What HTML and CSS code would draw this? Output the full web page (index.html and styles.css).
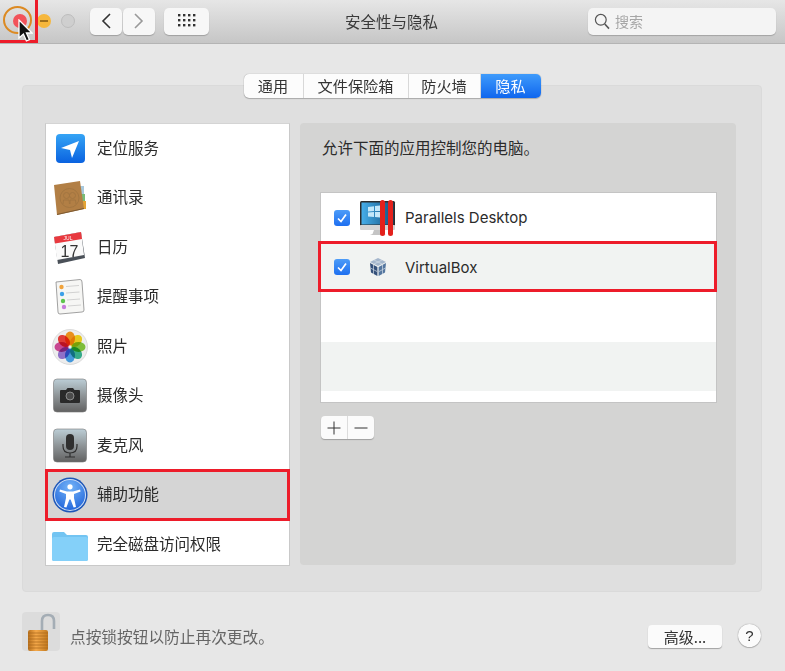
FILE: index.html
```html
<!DOCTYPE html>
<html lang="zh-CN">

<head>
    <meta charset="UTF-8">
    <title>安全性与隐私</title>
    <link rel="stylesheet" href="styles.css">
</head>

<body>
    <header class="titlebar">
        <div class="lights">
            <span class="light light-red"></span>
            <span class="light light-yellow"><i></i></span>
            <span class="light light-grey"></span>
        </div>
        <div class="nav">
            <button class="tool-btn nav-btn">
                <svg width="12" height="18" viewBox="0 0 12 18"><path d="M10 2 L3 9 L10 16" fill="none" stroke="#333" stroke-width="1.6"/></svg>
            </button>
            <button class="tool-btn nav-btn">
                <svg width="12" height="18" viewBox="0 0 12 18"><path d="M2 2 L9 9 L2 16" fill="none" stroke="#999" stroke-width="1.6"/></svg>
            </button>
        </div>
        <button class="tool-btn grid-btn">
            <svg width="18" height="14" viewBox="0 0 18 14" fill="#333">
                <rect x="0" y="0" width="2.4" height="2.4"/><rect x="5" y="0" width="2.4" height="2.4"/><rect x="10" y="0" width="2.4" height="2.4"/><rect x="15" y="0" width="2.4" height="2.4"/>
                <rect x="0" y="5" width="2.4" height="2.4"/><rect x="5" y="5" width="2.4" height="2.4"/><rect x="10" y="5" width="2.4" height="2.4"/><rect x="15" y="5" width="2.4" height="2.4"/>
                <rect x="0" y="10" width="2.4" height="2.4"/><rect x="5" y="10" width="2.4" height="2.4"/><rect x="10" y="10" width="2.4" height="2.4"/><rect x="15" y="10" width="2.4" height="2.4"/>
            </svg>
        </button>
        <h1 class="title">安全性与隐私</h1>
        <div class="search">
            <svg width="16" height="17" viewBox="0 0 16 17"><circle cx="6.8" cy="6.8" r="5.4" fill="none" stroke="#555" stroke-width="1.2"/><path d="M10.8 11 L15 15.6" stroke="#555" stroke-width="1.6"/></svg>
            <span>搜索</span>
        </div>
    </header>

    <main class="content">
        <nav class="tabs">
            <a class="tab">通用</a>
            <a class="tab">文件保险箱</a>
            <a class="tab">防火墙</a>
            <a class="tab tab-active">隐私</a>
        </nav>

        <section class="panel">
            <ul class="services">
                <li class="service">
                    <svg class="service-icon" viewBox="0 0 36 36">
                        <defs><linearGradient id="blue" x1="0" y1="0" x2="0" y2="1"><stop offset="0" stop-color="#35a4f5"/><stop offset="1" stop-color="#0a62e0"/></linearGradient></defs>
                        <rect x="4" y="3" width="29" height="29" rx="4" fill="url(#blue)"/>
                        <path d="M9 17 L27 10 L20 27 L18 19 Z" fill="#fff"/>
                    </svg>
                    <span>定位服务</span>
                </li>
                <li class="service">
                    <svg class="service-icon" viewBox="0 0 36 36">
                        <rect x="28" y="6" width="4" height="8" fill="#a8c8dc"/><rect x="29" y="14" width="4" height="7" fill="#78bb78"/><rect x="30" y="21" width="4" height="8" fill="#e4a435"/>
                        <path d="M2 5 L28 1 L32 29 L5 35 Z" fill="#b27f45"/>
                        <path d="M5 35 L32 29 L31.8 28 L5 34 Z" fill="#7d5a32"/>
                        <circle cx="17.5" cy="18" r="9.5" fill="none" stroke="#a0743f" stroke-width="0.9"/>
                        <circle cx="14.5" cy="15.5" r="3" fill="none" stroke="#a0743f" stroke-width="0.9"/>
                        <circle cx="20.5" cy="15.5" r="3" fill="none" stroke="#a0743f" stroke-width="0.9"/>
                        <path d="M11 24 L11.5 20 L17 20 L17.5 24 M18 24 L18 20 L23.5 20 L24 24" fill="none" stroke="#a0743f" stroke-width="0.9"/>
                    </svg>
                    <span>通讯录</span>
                </li>
                <li class="service">
                    <svg class="service-icon" viewBox="0 0 36 36">
                        <path d="M2 7 L29 2 L33 28 L6 34 Z" fill="#4a5058"/>
                        <path d="M2 7 L29 2 L32 25 L5 30 Z" fill="#fafafa"/>
                        <path d="M2 7 L29 2 L30 9 L3 13.5 Z" fill="#e8393f"/>
                        <text class="cal-month" x="16" y="10" text-anchor="middle">JUL</text>
                        <text class="cal-day" x="17.5" y="27" text-anchor="middle">17</text>
                    </svg>
                    <span>日历</span>
                </li>
                <li class="service">
                    <svg class="service-icon" viewBox="0 0 36 36">
                        <path d="M4 3 L28 0.5 Q30 0.5 30 3 L32 31 Q32 33 30 33 L8 35 Q6 35 6 33 Z" fill="#f6f6f4" stroke="#8a8a8a" stroke-width="0.8"/>
                        <circle cx="9.5" cy="8" r="2.2" fill="#f0a23a"/><circle cx="10" cy="15" r="2.2" fill="#3da0e8"/><circle cx="11" cy="22" r="2.2" fill="#5ec44e"/><circle cx="12" cy="28" r="2.2" fill="#c77bdc"/>
                        <path d="M14 7.5 L27 6.5 M14 14 L27.5 13 M15 21 L28 20 M16 27 L29 26" stroke="#c8c8c8" stroke-width="0.8"/>
                    </svg>
                    <span>提醒事项</span>
                </li>
                <li class="service">
                    <svg class="service-icon" viewBox="0 0 36 36">
                        <circle cx="18" cy="18" r="17.5" fill="#ededed" stroke="#c8c8c8" stroke-width="0.6"/>
                        <g class="petals">
                            <ellipse cx="18" cy="9.5" rx="5" ry="7" fill="#fb9a1e"/>
                            <ellipse cx="18" cy="9.5" rx="5" ry="7" fill="#f8d820" transform="rotate(45 18 18)"/>
                            <ellipse cx="18" cy="9.5" rx="5" ry="7" fill="#86cc3e" transform="rotate(90 18 18)"/>
                            <ellipse cx="18" cy="9.5" rx="5" ry="7" fill="#3ab894" transform="rotate(135 18 18)"/>
                            <ellipse cx="18" cy="9.5" rx="5" ry="7" fill="#4aa4ec" transform="rotate(180 18 18)"/>
                            <ellipse cx="18" cy="9.5" rx="5" ry="7" fill="#9a78d8" transform="rotate(225 18 18)"/>
                            <ellipse cx="18" cy="9.5" rx="5" ry="7" fill="#d64c9c" transform="rotate(270 18 18)"/>
                            <ellipse cx="18" cy="9.5" rx="5" ry="7" fill="#f0403c" transform="rotate(315 18 18)"/>
                        </g>
                    </svg>
                    <span>照片</span>
                </li>
                <li class="service">
                    <svg class="service-icon" viewBox="0 0 36 36">
                        <defs><linearGradient id="slate" x1="0" y1="0" x2="0" y2="1"><stop offset="0" stop-color="#bcced6"/><stop offset="0.5" stop-color="#8f9598"/><stop offset="1" stop-color="#626262"/></linearGradient></defs>
                        <rect x="1.5" y="1" width="33" height="33" rx="3.5" fill="url(#slate)" stroke="#777" stroke-width="0.6"/>
                        <path d="M9 12 L14 12 L15.5 10 L21 10 L22.5 12 L27 12 Q28 12 28 13 L28 24 Q28 25 27 25 L9 25 Q8 25 8 24 L8 13 Q8 12 9 12 Z" fill="#2a2a2a"/>
                        <circle cx="18" cy="18" r="4" fill="#4c4c4c" stroke="#a0a0a0" stroke-width="0.8"/>
                    </svg>
                    <span>摄像头</span>
                </li>
                <li class="service">
                    <svg class="service-icon" viewBox="0 0 36 36">
                        <rect x="1.5" y="1" width="33" height="33" rx="3.5" fill="url(#slate)" stroke="#777" stroke-width="0.6"/>
                        <rect x="14" y="6" width="8" height="16" rx="4" fill="#2f2f2f"/>
                        <path d="M11 16 L11 18 Q11 25 18 25 Q25 25 25 18 L25 16 M18 25 L18 29 M13 29 L23 29" fill="none" stroke="#2f2f2f" stroke-width="1.2"/>
                    </svg>
                    <span>麦克风</span>
                </li>
                <li class="service service-selected">
                    <svg class="service-icon" viewBox="0 0 36 36">
                        <defs><radialGradient id="acc" cx="0.5" cy="0.25" r="0.85"><stop offset="0" stop-color="#74b4f8"/><stop offset="1" stop-color="#1a5fd8"/></radialGradient></defs>
                        <circle cx="18" cy="18" r="17.5" fill="#1d56b8"/>
                        <circle cx="18" cy="18" r="16" fill="#cfe0f6"/>
                        <circle cx="18" cy="18" r="15" fill="url(#acc)"/>
                        <circle cx="18" cy="9.8" r="2.6" fill="#fff"/>
                        <path d="M8 12.6 L15 14.6 L21 14.6 L28 12.6 L28.6 14.6 L22 17 L22 21 L24 30 L21.6 30.6 L18.6 22.6 L17.4 22.6 L14.4 30.6 L12 30 L14 21 L14 17 L7.4 14.6 Z" fill="#fff"/>
                    </svg>
                    <span>辅助功能</span>
                </li>
                <li class="service">
                    <svg class="service-icon" viewBox="0 0 36 36">
                        <path d="M0 7 Q0 5 2 5 L12 5 L15 8 L34 8 Q36 8 36 10 L36 32 Q36 34 34 34 L2 34 Q0 34 0 32 Z" fill="#72c4f2"/>
                        <rect x="0" y="10" width="36" height="24" rx="2" fill="#84d0f9"/>
                    </svg>
                    <span>完全磁盘访问权限</span>
                </li>
            </ul>

            <div class="detail">
                <p class="detail-label">允许下面的应用控制您的电脑。</p>
                <div class="apps">
                    <div class="app">
                        <span class="check">
                            <svg width="12" height="12" viewBox="0 0 12 12"><path d="M2 6.5 L5 9.5 L10 2.5" fill="none" stroke="#fff" stroke-width="1.7"/></svg>
                        </span>
                        <svg class="app-icon" viewBox="0 0 36 36">
                            <defs><linearGradient id="screen" x1="0" y1="0" x2="1" y2="0"><stop offset="0" stop-color="#45aeea"/><stop offset="1" stop-color="#14507e"/></linearGradient></defs>
                            <path d="M14 30 L22 30 L23.5 34 L26 35 L10 35 L12.5 34 Z" fill="#c4c4c4"/>
                            <rect x="0" y="1" width="35" height="25" rx="1.5" fill="#2c2c2c"/>
                            <rect x="1.5" y="2.5" width="32" height="22" fill="url(#screen)"/>
                            <path d="M8 7 L14 6.2 L14 11 L8 11.4 Z M15 6 L20 5.4 L20 11 L15 11 Z M8 12.4 L14 12 L14 17 L8 16.4 Z M15 12 L20 12 L20 17.6 L15 17 Z" fill="#c4e8fa"/>
                            <rect x="0" y="25" width="35" height="5" rx="1" fill="#d4d4d4"/>
                            <rect x="20" y="0" width="5" height="36" rx="2.5" fill="#e3211c"/>
                            <rect x="28" y="0" width="5" height="36" rx="2.5" fill="#e3211c"/>
                        </svg>
                        <span>Parallels Desktop</span>
                    </div>
                    <div class="app app-alt">
                        <span class="check">
                            <svg width="12" height="12" viewBox="0 0 12 12"><path d="M2 6.5 L5 9.5 L10 2.5" fill="none" stroke="#fff" stroke-width="1.7"/></svg>
                        </span>
                        <svg class="app-icon" viewBox="0 0 36 36">
                            <path d="M18 9 L26 13 L18 17 L10 13 Z" fill="#a4b6cc"/>
                            <path d="M10 14 L17.4 18 L17.4 27 L11 23.5 Z" fill="#34507a"/>
                            <path d="M26 14 L18.6 18 L18.6 27 L25 23.5 Z" fill="#54769f"/>
                            <path d="M14 11 L22 15 M22 11 L14 15 M13.5 16 L13.5 25 M22.5 16 L22.5 25 M10.5 19 L17 22.5 M25.5 19 L19 22.5" stroke="#d4dce6" stroke-width="0.7"/>
                        </svg>
                        <span>VirtualBox</span>
                    </div>
                    <div class="app"></div>
                    <div class="app app-alt"></div>
                    <div class="app app-last"></div>
                </div>
                <div class="plus-minus">
                    <button class="pm-btn">
                        <svg width="14" height="14" viewBox="0 0 14 14"><path d="M7 0.5 L7 13.5 M0.5 7 L13.5 7" stroke="#333" stroke-width="1"/></svg>
                    </button>
                    <button class="pm-btn">
                        <svg width="14" height="14" viewBox="0 0 14 14"><path d="M0.5 7 L13.5 7" stroke="#333" stroke-width="1"/></svg>
                    </button>
                </div>
            </div>
        </section>

        <footer class="footer">
            <div class="lock">
                <svg width="28" height="38" viewBox="0 0 28 38">
                    <defs><linearGradient id="brass" x1="0" y1="0" x2="1" y2="0"><stop offset="0" stop-color="#b8701c"/><stop offset="0.4" stop-color="#f4a84a"/><stop offset="1" stop-color="#c27a20"/></linearGradient></defs>
                    <path d="M14 18 L14 8 Q14 2 20 2 Q26 2 26 8 L26 16" fill="none" stroke="#a4adb5" stroke-width="2.6"/>
                    <rect x="0" y="17" width="20" height="21" rx="2" fill="url(#brass)"/>
                    <path d="M0 20 H20 M0 23 H20 M0 26 H20 M0 29 H20 M0 32 H20 M0 35 H20" stroke="#a8651a" stroke-width="0.7"/>
                </svg>
            </div>
            <span class="lock-text">点按锁按钮以防止再次更改。</span>
            <button class="adv-btn">高级...</button>
            <button class="help-btn">?</button>
        </footer>
    </main>

    <!-- annotations drawn on top of the screenshot -->
    <div class="mark mark-close"></div>
    <div class="mark mark-app"></div>
    <div class="mark mark-service"></div>
    <div class="ring"></div>
    <svg class="cursor" width="16" height="24" viewBox="0 0 16 24"><path d="M2 1 L2 19 L6.4 15 L9.4 22 L12.4 20.6 L9.4 14 L15 14 Z" fill="#111" stroke="#fff" stroke-width="1.3"/></svg>
</body>

</html>
```

FILE: styles.css
```css
* {
    box-sizing: border-box;
}

body {
    font-family: "Noto Sans CJK SC", sans-serif;
    background-color: #e7e7e7;
    color: #2b2b2b;
    margin: 0;
    padding: 0;
    width: 785px;
    height: 671px;
    overflow: hidden;
    position: relative;
}

button {
    font-family: inherit;
    border: none;
    padding: 0;
    cursor: pointer;
}

/* title bar */

.titlebar {
    height: 44px;
    display: flex;
    align-items: center;
    padding: 0 9px 1px 13px;
    background: linear-gradient(#e6e6e6, #c6c6c6);
    border-bottom: 1px solid #b4b4b4;
    position: relative;
}

.lights {
    display: flex;
    gap: 10px;
    width: 77px;
}

.light {
    width: 14px;
    height: 14px;
    border-radius: 50%;
    display: flex;
    align-items: center;
    justify-content: center;
}

.light-red {
    background-color: #f2525a;
}

.light-yellow {
    background-color: #f6b73c;
}

.light-yellow i {
    width: 8px;
    height: 1.5px;
    background-color: #a0701c;
}

.light-grey {
    background-color: #cfcfcf;
    border: 1px solid #bdbdbd;
}

.tool-btn {
    height: 27px;
    background-color: #f7f7f7;
    border-radius: 5px;
    box-shadow: 0 1px 1px rgba(0, 0, 0, 0.22);
    display: flex;
    align-items: center;
    justify-content: center;
}

.nav {
    display: flex;
    gap: 1px;
    margin-right: 9px;
}

.nav-btn {
    width: 32px;
}

.grid-btn {
    width: 45px;
}

.title {
    position: absolute;
    left: 0;
    right: 2px;
    top: 10px;
    margin: 0;
    text-align: center;
    font-size: 15.5px;
    font-weight: 400;
    line-height: 22px;
    color: #3a3a3a;
}

.search {
    margin-left: auto;
    width: 188px;
    height: 27px;
    background-color: #f4f4f4;
    border-radius: 5px;
    box-shadow: 0 1px 1px rgba(0, 0, 0, 0.2);
    display: flex;
    align-items: center;
    gap: 5px;
    padding-left: 6px;
    font-size: 14px;
    color: #a6a6a6;
}

/* main area */

.content {
    padding: 30px 23px 0 22px;
}

.tabs {
    display: flex;
    width: 297px;
    height: 24px;
    margin: 0 auto -13px;
    background-color: #fcfcfc;
    border-radius: 5px;
    box-shadow: 0 0 1px rgba(0, 0, 0, 0.4), 0 1px 1px rgba(0, 0, 0, 0.2);
    position: relative;
    font-size: 15.2px;
}

.tab {
    display: flex;
    align-items: center;
    justify-content: center;
    height: 24px;
    padding-bottom: 3px;
    border-right: 1px solid #d8d8d8;
    color: #333;
}

.tab:nth-child(1) {
    width: 60px;
}

.tab:nth-child(2) {
    width: 105px;
}

.tab:nth-child(3) {
    width: 72px;
}

.tab-active {
    width: 60px;
    border-right: none;
    border-radius: 0 5px 5px 0;
    color: #fff;
    background: linear-gradient(#3f9bfb, #0f66ee);
}

.panel {
    height: 507px;
    display: flex;
    gap: 10px;
    padding: 37px 25px 25px 22px;
    background-color: #dfdfdf;
    border: 1px solid #dadada;
    border-radius: 4px;
}

.services {
    width: 245px;
    margin: 0;
    padding: 0;
    list-style: none;
    background-color: #fff;
    border: 1px solid #c9c9c9;
    border-top-color: #d4d4d4;
    display: grid;
    grid-auto-rows: 49.5px;
    overflow: hidden;
    font-size: 15.5px;
}

.service {
    display: flex;
    align-items: center;
    gap: 9px;
    padding-left: 6px;
}

.service span {
    padding-bottom: 4px;
}

.service-selected {
    background-color: #d5d5d5;
}

.service-icon {
    width: 36px;
    height: 36px;
    flex-shrink: 0;
}

.cal-month {
    font-family: "Liberation Sans", sans-serif;
    font-size: 5px;
    fill: #fff;
}

.cal-day {
    font-family: "Liberation Sans", sans-serif;
    font-size: 16px;
    fill: #333;
}

.petals ellipse {
    mix-blend-mode: multiply;
}

.detail {
    flex: 1;
    margin-bottom: 1px;
    background-color: #d4d4d3;
    border-radius: 4px;
    padding: 13px 19px 0 20px;
}

.detail-label {
    margin: 0 0 34px 2px;
    font-size: 15.5px;
    line-height: 22px;
    color: #2b2b2b;
}

.apps {
    background-color: #fff;
    border: 1px solid #c4c4c4;
    height: 211px;
    font-family: Inter, "Noto Sans CJK SC", sans-serif;
    font-size: 15px;
}

.app {
    height: 49.5px;
    display: flex;
    align-items: center;
    padding-left: 13px;
}

.app-alt {
    background-color: #f1f3f2;
}

.app-last {
    height: 11px;
}

.check {
    width: 16px;
    height: 16px;
    border-radius: 3px;
    background: linear-gradient(#4d9cf8, #1e6ff0);
    display: flex;
    align-items: center;
    justify-content: center;
}

.app-icon {
    width: 36px;
    height: 36px;
    margin: 0 9px 0 10px;
}

.plus-minus {
    display: flex;
    width: 53px;
    height: 23px;
    margin: 13px 0 0 1px;
    background-color: #fbfbfb;
    border-radius: 4px;
    box-shadow: 0 1px 1px rgba(0, 0, 0, 0.25);
}

.pm-btn {
    flex: 1;
    background: none;
    display: flex;
    align-items: center;
    justify-content: center;
}

.pm-btn:first-child {
    border-right: 1px solid #dcdcdc;
}

/* bottom row */

.footer {
    display: flex;
    align-items: flex-start;
    margin: 20px 1px 0 0;
    height: 40px;
}

.lock {
    width: 38px;
    height: 39px;
    background-color: #dcdcdc;
    border-radius: 4px;
    padding-left: 6px;
    display: flex;
    align-items: flex-end;
}

.lock-text {
    margin: 14px 0 0 10px;
    font-size: 15.7px;
    line-height: 22px;
    color: #666;
}

.adv-btn {
    margin: 13px 0 0 auto;
    width: 74px;
    height: 23px;
    background-color: #fbfbfb;
    border-radius: 4px;
    box-shadow: 0 1px 1px rgba(0, 0, 0, 0.3);
    font-size: 15px;
    line-height: 21px;
    color: #333;
}

.help-btn {
    margin: 12px 0 0 16px;
    width: 23px;
    height: 23px;
    border-radius: 50%;
    background-color: #fbfbfb;
    box-shadow: 0 0 1px rgba(0, 0, 0, 0.5), 0 1px 1px rgba(0, 0, 0, 0.2);
    font-family: "Liberation Sans", sans-serif;
    font-size: 15px;
    color: #333;
}

/* red boxes and pointer lying over the window */

.mark {
    position: absolute;
    border: 3px solid #ed1c2a;
}

.mark-close {
    left: -3px;
    top: -3px;
    width: 41px;
    height: 46px;
}

.mark-app {
    left: 318px;
    top: 241px;
    width: 399px;
    height: 51px;
}

.mark-service {
    left: 45px;
    top: 469px;
    width: 245px;
    height: 52px;
}

.ring {
    position: absolute;
    left: 3px;
    top: 6px;
    width: 29px;
    height: 28px;
    border: 2px solid #dc8a22;
    border-radius: 50%;
}

.cursor {
    position: absolute;
    left: 17px;
    top: 19px;
}
```
